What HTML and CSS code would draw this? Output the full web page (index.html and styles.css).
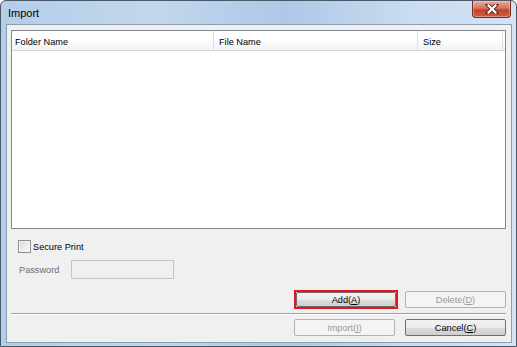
FILE: index.html
```html
<!DOCTYPE html>
<html>
<head>
<meta charset="utf-8">
<link rel="stylesheet" href="styles.css">
</head>
<body>
<div class="window">
  <div class="titlebar">
    <span class="title">Import</span>
    <div class="close">
      <svg width="16" height="10" viewBox="0 0 16 10">
        <path d="M4 1 L12 9 M12 1 L4 9" stroke="#5a2018" stroke-width="4" stroke-linecap="square"/>
        <path d="M4.5 1.5 L11.5 8.5 M11.5 1.5 L4.5 8.5" stroke="#ffffff" stroke-width="2.2" stroke-linecap="square"/>
      </svg>
    </div>
  </div>
  <div class="client">
    <div class="listbox">
      <div class="header">
        <div class="col c1">Folder Name</div>
        <div class="col c2">File Name</div>
        <div class="col c3">Size</div>
      </div>
    </div>
    <div class="check-row">
      <span class="checkbox"></span>
      <span class="label">Secure Print</span>
    </div>
    <div class="pw-row">
      <span class="pw-label">Password</span>
      <span class="pw-input"></span>
    </div>
    <div class="btn-row first">
      <div class="highlight"><div class="btn">Add(<u>A</u>)</div></div>
      <div class="btn disabled">Delete(<u>D</u>)</div>
    </div>
    <div class="sep"></div>
    <div class="btn-row second">
      <div class="btn disabled">Import(<u>I</u>)</div>
      <div class="btn">Cancel(<u>C</u>)</div>
    </div>
  </div>
</div>
</body>
</html>
```
FILE: styles.css
```css
html, body {
  margin: 0;
  padding: 0;
  background: #ffffff;
}
body {
  font-family: "Liberation Sans", Arial, sans-serif;
  font-size: 9.2px;
  color: #000;
}
.window {
  width: 517px;
  height: 347px;
  box-sizing: border-box;
  border: 1px solid #4a5868;
  border-radius: 6px 6px 0 0;
  padding: 0 4px 3px 5px;
  background: linear-gradient(90deg, #b4cde9 0%, #c2d7ee 30%, #aec8e6 55%, #c9dcf1 80%, #d3e3f4 100%);
  display: flex;
  flex-direction: column;
}
.titlebar {
  height: 23px;
  display: flex;
  align-items: flex-start;
  justify-content: space-between;
}
.title {
  font-size: 11px;
  padding-left: 2px;
  margin-top: 6px;
  color: #000;
}
.close {
  width: 39px;
  height: 17px;
  box-sizing: border-box;
  margin-right: 1px;
  border: 1px solid #6e2a20;
  border-top: none;
  border-radius: 0 0 4px 4px;
  background: linear-gradient(180deg, #e9a99a 0%, #d8745f 45%, #c2432b 55%, #cf5a3e 100%);
  display: flex;
  align-items: center;
  justify-content: center;
  box-shadow: inset 0 0 0 1px rgba(255,255,255,0.35);
}
.close svg { display: block; }
.client {
  flex: 1;
  border: 1px solid #8b9db3;
  background: #f0f0f0;
  padding: 5px 5px 0 4px;
  display: flex;
  flex-direction: column;
}
.listbox {
  height: 199px;
  box-sizing: border-box;
  border: 1px solid #828790;
  background: #fff;
}
.header {
  height: 19px;
  display: flex;
  border-bottom: 1px solid #d5d5d5;
  background: linear-gradient(180deg, #ffffff 0%, #ffffff 40%, #f1f2f4 100%);
}
.col {
  box-sizing: border-box;
  border-right: 1px solid #dcdcdc;
  padding: 5px 0 0 3px;
  height: 19px;
  line-height: 12px;
}
.c1 { width: 202px; }
.c2 { width: 204px; padding-left: 5px; }
.c3 { width: 85px; padding-left: 5px; }
.check-row {
  margin-top: 11px;
  height: 13px;
  display: flex;
  align-items: center;
  padding-left: 7px;
}
.checkbox {
  width: 13px;
  height: 13px;
  box-sizing: border-box;
  border: 1px solid #8e8f8f;
  background: linear-gradient(135deg, #d6d6d6 0%, #efefef 60%, #fbfbfb 100%);
  box-shadow: inset 0 0 0 1px #f4f4f4;
}
.label {
  margin-left: 2px;
}
.pw-row {
  margin-top: 7px;
  height: 19px;
  display: flex;
  align-items: center;
  padding-left: 8px;
}
.pw-label {
  width: 52px;
  color: #6d6d6d;
}
.pw-input {
  width: 103px;
  height: 19px;
  box-sizing: border-box;
  border: 1px solid #c5c5c5;
  background: #f0f0f0;
}
.btn-row {
  display: flex;
  justify-content: flex-end;
  align-items: center;
}
.btn-row.first {
  margin-top: 11px;
  height: 19px;
  gap: 7px;
}
.btn-row.second {
  margin-top: 4px;
  gap: 10px;
}
.highlight {
  border: 2px solid #e8141b;
}
.btn {
  width: 101px;
  height: 17px;
  box-sizing: border-box;
  border: 1px solid #707070;
  border-radius: 2px;
  background: linear-gradient(180deg, #f3f3f3 0%, #ebebeb 50%, #dddddd 51%, #cfcfcf 100%);
  display: flex;
  align-items: center;
  justify-content: center;
  color: #000;
}
.highlight .btn {
  width: 100px;
  height: 15px;
  border-color: #6a6a6a;
}
.btn.disabled {
  border-color: #adb2b5;
  background: #f4f4f4;
  color: #9a9a9a;
}
.btn u { text-underline-offset: 1px; }
.sep {
  margin-top: 4px;
  height: 1px;
  background: #a0a0a0;
  border-bottom: 1px solid #ffffff;
}
```
